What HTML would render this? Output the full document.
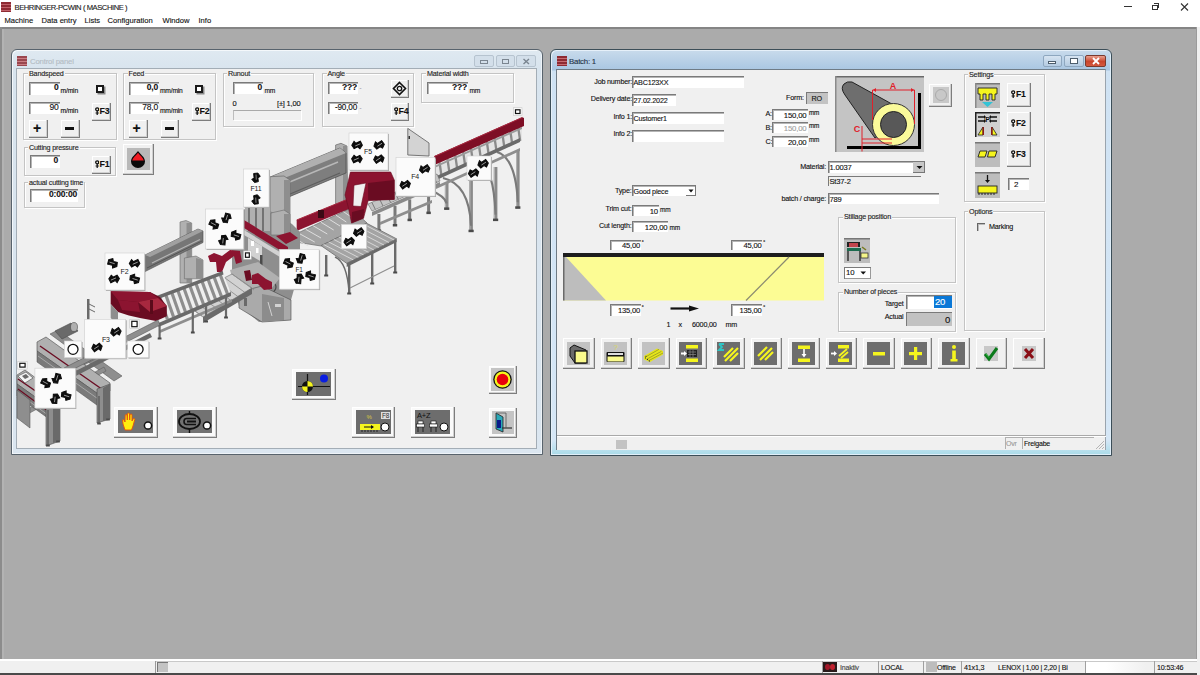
<!DOCTYPE html>
<html><head><meta charset="utf-8">
<style>
*{box-sizing:border-box}
html,body{margin:0;padding:0}
body{width:1200px;height:675px;overflow:hidden;position:relative;background:#ababab;font-family:"Liberation Sans",sans-serif;font-size:7.2px;line-height:9px;color:#111;letter-spacing:-.2px;-webkit-text-stroke-width:.12px}
.a{position:absolute}
.t{position:absolute;white-space:nowrap}
.r{text-align:right}
.gb{position:absolute;border:1px solid #c4c4c4;box-shadow:inset 1px 1px 0 #fff,1px 1px 0 #fff}
.gl{position:absolute;background:#f0f0f0;padding:0 1px;white-space:nowrap;line-height:9px;color:#222}
.ed{position:absolute;background:#fff;border-top:1px solid #7a7a7a;border-left:1px solid #7a7a7a;box-shadow:inset 1px 1px 0 #b5b5b5}
.bt{position:absolute;background:#f0f0f0;border-right:1px solid #7d7d7d;border-bottom:1px solid #7d7d7d;box-shadow:inset -1px -1px 0 #d0d0d0, inset 1px 1px 0 #fff}
.b{font-weight:bold}
.mm{font-size:6.5px}
</style></head>
<body>
<!-- app title + menu -->
<div class="a" style="left:0;top:0;width:1200px;height:27px;background:#fff"></div>
<div class="a" style="left:1px;top:2px;width:10px;height:10px;background:repeating-linear-gradient(#8e2a32 0,#8e2a32 2px,#c06068 2px,#c06068 3px)"></div>
<div class="t" style="left:14.5px;top:2.5px;font-size:7.6px;letter-spacing:-.42px;color:#1a1a1a">BEHRINGER-PCWIN ( MASCHINE )</div>
<div class="t" style="left:4.5px;top:15.7px;font-size:7.6px;letter-spacing:0">Machine</div>
<div class="t" style="left:41.5px;top:15.7px;font-size:7.6px;letter-spacing:0">Data entry</div>
<div class="t" style="left:84.5px;top:15.7px;font-size:7.6px;letter-spacing:0">Lists</div>
<div class="t" style="left:107.5px;top:15.7px;font-size:7.6px;letter-spacing:0">Configuration</div>
<div class="t" style="left:162.5px;top:15.7px;font-size:7.6px;letter-spacing:0">Window</div>
<div class="t" style="left:198.5px;top:15.7px;font-size:7.6px;letter-spacing:0">Info</div>
<!-- caption buttons app -->
<div class="a" style="left:1123.5px;top:6px;width:8px;height:1.2px;background:#333"></div>
<div class="a" style="left:1152px;top:4.5px;width:6px;height:5.5px;border:1px solid #333"></div><div class="a" style="left:1154px;top:3px;width:5px;height:5px;border-top:1px solid #333;border-right:1px solid #333"></div>
<svg class="a" style="left:1180px;top:2.5px" width="9" height="8"><path d="M1 0.5L8 7.5M8 0.5L1 7.5" stroke="#333" stroke-width="1.1"/></svg>
<!-- MDI border -->
<div class="a" style="left:0;top:27px;width:1200px;height:2px;background:#858585"></div>
<div class="a" style="left:0;top:27px;width:2px;height:632px;background:#8c8c8c"></div><div class="a" style="left:2px;top:29px;width:2px;height:630px;background:#b3b3b3"></div>
<div class="a" style="left:1196px;top:27px;width:1px;height:632px;background:#9b9b9b"></div>
<div class="a" style="left:1197px;top:27px;width:3px;height:632px;background:#f0f0f0"></div>

<!-- ===== control panel window frame ===== -->
<div class="a" style="left:11px;top:49px;width:532px;height:406px;border:1px solid #58636d;border-radius:6px 6px 0 0;background:linear-gradient(#dfe9f1,#d8e4ee 20px,#dbe6f0);box-shadow:inset 1px 1px 0 #f4f8fb,inset -1px -1px 0 #eef3f8"></div>
<div class="a" style="left:16px;top:68px;width:521px;height:381px;border:1px solid #a3adb6;background:#f0f0f0"></div>
<div class="a" style="left:17px;top:56px;width:10px;height:10px;background:repeating-linear-gradient(#8e2a32 0,#8e2a32 2px,#c76a70 2px,#c76a70 3px);opacity:.85"></div>
<div class="t" style="left:30px;top:57px;font-size:7.8px;color:#b4bcc4">Control panel</div>
<div class="a" style="left:474px;top:55px;width:20px;height:12px;border:1px solid #b6c3cf;border-radius:2px;background:#d3dfea"></div>
<div class="a" style="left:496px;top:55px;width:19px;height:12px;border:1px solid #b6c3cf;border-radius:2px;background:#d3dfea"></div>
<div class="a" style="left:516px;top:55px;width:20px;height:12px;border:1px solid #b6c3cf;border-radius:2px;background:#d3dfea"></div>
<div class="a" style="left:480px;top:60px;width:8px;height:4px;border:1px solid #7a8590"></div>
<div class="a" style="left:502px;top:59px;width:7px;height:5px;border:1px solid #7a8590"></div>
<svg class="a" style="left:522px;top:58px" width="9" height="7"><path d="M1.5 1L7 6M7 1L1.5 6" stroke="#7a8590" stroke-width="1.4"/></svg>

<!-- ===== control panel content ===== -->
<!-- Bandspeed -->
<div class="gb" style="left:23px;top:73px;width:94px;height:67px"></div>
<div class="gl" style="left:28px;top:69px">Bandspeed</div>
<div class="ed" style="left:29px;top:82px;width:31px;height:13px"></div>
<div class="t r b" style="left:29px;top:83px;width:29.5px;font-size:8.5px;line-height:9px">0</div>
<div class="t mm" style="left:60.5px;top:86px;font-size:6.8px">m/min</div>
<div class="ed" style="left:29px;top:102px;width:31px;height:12px"></div>
<div class="t r" style="left:29px;top:103px;width:29.5px;font-size:8.5px;line-height:9px">90</div>
<div class="t mm" style="left:60.5px;top:106px;font-size:6.8px">m/min</div>
<div class="a" style="left:96px;top:84.5px;width:8px;height:8px;border:2.5px solid #1a1a1a;background:#fff;box-shadow:1.5px 1.5px 0 #8a8a8a"></div>
<div class="bt" style="left:91.5px;top:102.5px;width:19px;height:18.5px"></div>
<div class="t b" style="left:94.5px;top:106px;font-size:8.8px;line-height:10px;letter-spacing:-.3px"><svg width="4.5" height="8" style="vertical-align:-0.5px;margin-right:.6px"><circle cx="2.2" cy="2.3" r="1.5" fill="none" stroke="#111" stroke-width="1.3"/><path d="M2.2 3.8V8M.6 6H3.8" stroke="#111" stroke-width="1.2"/></svg>F3</div>
<div class="bt" style="left:29px;top:119.5px;width:18.5px;height:18px"></div>
<div class="t b" style="left:33px;top:119px;font-size:14px;line-height:18px">+</div>
<div class="bt" style="left:60.5px;top:119.5px;width:19px;height:18px"></div>
<div class="a" style="left:65px;top:127px;width:9px;height:3px;background:#111"></div>
<!-- Feed -->
<div class="gb" style="left:122.5px;top:73px;width:93.5px;height:67px"></div>
<div class="gl" style="left:127.5px;top:69px">Feed</div>
<div class="ed" style="left:129px;top:82px;width:30px;height:13px"></div>
<div class="t r b" style="left:129px;top:83px;width:29px;font-size:8.5px;line-height:9px">0,0</div>
<div class="t mm" style="left:160px;top:86px;font-size:6.7px">mm/min</div>
<div class="ed" style="left:129px;top:102px;width:30px;height:12px"></div>
<div class="t r" style="left:129px;top:103px;width:29px;font-size:8.5px;line-height:9px">78,0</div>
<div class="t mm" style="left:160px;top:106px;font-size:6.7px">mm/min</div>
<div class="a" style="left:195px;top:84.5px;width:8px;height:8px;border:2.5px solid #1a1a1a;background:#fff;box-shadow:1.5px 1.5px 0 #8a8a8a"></div>
<div class="bt" style="left:192px;top:102.5px;width:18.5px;height:18.5px"></div>
<div class="t b" style="left:194.5px;top:106px;font-size:8.8px;line-height:10px;letter-spacing:-.3px"><svg width="4.5" height="8" style="vertical-align:-0.5px;margin-right:.6px"><circle cx="2.2" cy="2.3" r="1.5" fill="none" stroke="#111" stroke-width="1.3"/><path d="M2.2 3.8V8M.6 6H3.8" stroke="#111" stroke-width="1.2"/></svg>F2</div>
<div class="bt" style="left:128.5px;top:119.5px;width:19px;height:18px"></div>
<div class="t b" style="left:132.5px;top:119px;font-size:14px;line-height:18px">+</div>
<div class="bt" style="left:160.5px;top:119.5px;width:18.5px;height:18px"></div>
<div class="a" style="left:165px;top:127px;width:9px;height:3px;background:#111"></div>
<!-- Runout -->
<div class="gb" style="left:222.5px;top:73px;width:91.5px;height:53.5px"></div>
<div class="gl" style="left:227px;top:69px">Runout</div>
<div class="ed" style="left:233px;top:82px;width:30px;height:12px"></div>
<div class="t r b" style="left:233px;top:83px;width:29px;font-size:8.5px;line-height:9px">0</div>
<div class="t mm" style="left:264.5px;top:86px;font-size:6.7px">mm</div>
<div class="t" style="left:232.5px;top:99px;font-size:7.5px">0</div>
<div class="t" style="left:277px;top:99px;font-size:7.5px">[±] 1,00</div>
<div class="a" style="left:233px;top:110px;width:67.5px;height:10px;border-top:1px solid #a9a9a9;border-left:1px solid #bdbdbd;box-shadow:1px 1px 0 #fff"></div>
<!-- Angle -->
<div class="gb" style="left:321.5px;top:73px;width:92px;height:53.5px"></div>
<div class="gl" style="left:326.5px;top:69px">Angle</div>
<div class="ed" style="left:328px;top:82px;width:30px;height:12px"></div>
<div class="t r b" style="left:328px;top:83px;width:29px;font-size:8.5px;line-height:9px">???</div>
<div class="t" style="left:359.5px;top:84px;font-size:6px;color:#777">-</div>
<div class="ed" style="left:328px;top:102px;width:30px;height:12px"></div>
<div class="t r" style="left:328px;top:103px;width:29px;font-size:8.2px;line-height:9px">-90,00</div>
<div class="t" style="left:359.5px;top:104px;font-size:6px;color:#777">-</div>
<div class="bt" style="left:391px;top:80px;width:18px;height:18px"></div>
<svg class="a" style="left:392px;top:81px" width="15" height="15"><path d="M7.5 1.5L13.5 7.5L7.5 13.5L1.5 7.5Z" fill="none" stroke="#111" stroke-width="1.6"/><circle cx="7.5" cy="7.5" r="2.2" fill="none" stroke="#111" stroke-width="1.3"/></svg>
<div class="bt" style="left:391px;top:102.5px;width:18px;height:18.5px"></div>
<div class="t b" style="left:393.5px;top:106px;font-size:8.8px;line-height:10px;letter-spacing:-.3px"><svg width="4.5" height="8" style="vertical-align:-0.5px;margin-right:.6px"><circle cx="2.2" cy="2.3" r="1.5" fill="none" stroke="#111" stroke-width="1.3"/><path d="M2.2 3.8V8M.6 6H3.8" stroke="#111" stroke-width="1.2"/></svg>F4</div>
<!-- Material width -->
<div class="gb" style="left:421px;top:73px;width:92.5px;height:30px"></div>
<div class="gl" style="left:426px;top:69px">Material width</div>
<div class="ed" style="left:427px;top:82px;width:41px;height:12px"></div>
<div class="t r b" style="left:427px;top:83px;width:40px;font-size:8.5px;line-height:9px">???</div>
<div class="t mm" style="left:469.5px;top:86px;font-size:6.7px">mm</div>
<!-- Cutting pressure -->
<div class="gb" style="left:23.5px;top:146.5px;width:92.5px;height:29px"></div>
<div class="gl" style="left:28px;top:142.5px">Cutting pressure</div>
<div class="ed" style="left:29.5px;top:155px;width:30px;height:13px"></div>
<div class="t r b" style="left:29.5px;top:156px;width:28.5px;font-size:8.5px;line-height:9px">0</div>
<div class="bt" style="left:92px;top:155.5px;width:18.5px;height:18.5px"></div>
<div class="t b" style="left:94.5px;top:159px;font-size:8.8px;line-height:10px;letter-spacing:-.3px"><svg width="4.5" height="8" style="vertical-align:-0.5px;margin-right:.6px"><circle cx="2.2" cy="2.3" r="1.5" fill="none" stroke="#111" stroke-width="1.3"/><path d="M2.2 3.8V8M.6 6H3.8" stroke="#111" stroke-width="1.2"/></svg>F1</div>
<!-- drop button -->
<div class="bt" style="left:122.5px;top:144px;width:31.5px;height:30.5px"></div>
<div class="a" style="left:127px;top:147.5px;width:22.5px;height:22.5px;background:#b9b9b9"></div>
<svg class="a" style="left:127px;top:147.5px" width="23" height="23"><path d="M11 3C13.5 6.5 18 9 18 13.5A7 6.5 0 0 1 4 13.5C4 9 8.5 6.5 11 3Z" fill="#0a0a0a"/><path d="M11 4.8C13 7.5 16.2 9.8 16.8 12.5L5.2 12.5C5.8 9.8 9 7.5 11 4.8Z" fill="#f01c24"/></svg>
<!-- actual cutting time -->
<div class="gb" style="left:23.5px;top:182px;width:61px;height:26px"></div>
<div class="gl" style="left:28px;top:178px">actual cutting time</div>
<div class="ed" style="left:29.5px;top:189px;width:48.5px;height:12.5px"></div>
<div class="t r b" style="left:29.5px;top:190px;width:47.5px;font-size:8.5px;line-height:9px">0:00:00</div>

<!-- machine image -->
<svg class="a" style="left:16px;top:69px" width="521" height="380" viewBox="16 69 521 380"><rect x="444.9" y="183.0" width="3.6" height="26.4" fill="#8a8a8a"/><rect x="444.9" y="183.0" width="1.2" height="26.4" fill="#b0b0b0"/><rect x="444.1" y="207.4" width="5.2" height="2.5" fill="#4a4a4a"/><rect x="469.3" y="178.0" width="3.6" height="53.7" fill="#8a8a8a"/><rect x="469.3" y="178.0" width="1.2" height="53.7" fill="#b0b0b0"/><rect x="468.5" y="229.7" width="5.2" height="2.5" fill="#4a4a4a"/><rect x="493.8" y="167.0" width="3.6" height="53.6" fill="#8a8a8a"/><rect x="493.8" y="167.0" width="1.2" height="53.6" fill="#b0b0b0"/><rect x="493.0" y="218.6" width="5.2" height="2.5" fill="#4a4a4a"/><rect x="516.0" y="150.0" width="3.6" height="58.3" fill="#8a8a8a"/><rect x="516.0" y="150.0" width="1.2" height="58.3" fill="#b0b0b0"/><rect x="515.2" y="206.3" width="5.2" height="2.5" fill="#4a4a4a"/><path d="M443 178 Q469.1 184 471.1 225.7" stroke="#7a7a7a" stroke-width="2.2" fill="none"/><path d="M478 160 Q493.6 166 495.6 214.6" stroke="#7a7a7a" stroke-width="2.2" fill="none"/><path d="M497 152 Q515.8 158 517.8 202.3" stroke="#7a7a7a" stroke-width="2.2" fill="none"/><path d="M430 190 Q444.7 196 446.7 203.4" stroke="#7a7a7a" stroke-width="2.2" fill="none"/><polygon points="435.6,165.0 522.0,126.0 522.0,140.0 435.6,179.0" fill="#e4e4e4"/><polygon points="438.5,163.2 440.7,162.2 442.7,176.2 440.5,177.2" fill="#8a8a8a"/><polygon points="446.4,159.7 448.6,158.7 450.6,172.7 448.4,173.7" fill="#8a8a8a"/><polygon points="454.2,156.1 456.4,155.1 458.4,169.1 456.2,170.1" fill="#8a8a8a"/><polygon points="462.1,152.6 464.3,151.6 466.3,165.6 464.1,166.6" fill="#8a8a8a"/><polygon points="469.9,149.0 472.1,148.0 474.1,162.0 471.9,163.0" fill="#8a8a8a"/><polygon points="477.8,145.5 480.0,144.5 482.0,158.5 479.8,159.5" fill="#8a8a8a"/><polygon points="485.7,142.0 487.9,141.0 489.9,155.0 487.7,156.0" fill="#8a8a8a"/><polygon points="493.5,138.4 495.7,137.4 497.7,151.4 495.5,152.4" fill="#8a8a8a"/><polygon points="501.4,134.9 503.6,133.9 505.6,147.9 503.4,148.9" fill="#8a8a8a"/><polygon points="509.2,131.3 511.4,130.3 513.4,144.3 511.2,145.3" fill="#8a8a8a"/><polygon points="517.1,127.8 519.3,126.8 521.3,140.8 519.1,141.8" fill="#8a8a8a"/><polygon points="434.4,177.0 520.0,138.0 520.0,142.0 434.4,181.0" fill="#6a6a6a"/><polygon points="434.4,166.0 522.0,127.0 522.0,129.0 434.4,168.0" fill="#9a9a9a"/><polygon points="436.0,186.0 520.0,148.0 520.0,151.0 436.0,189.0" fill="#8e8e8e"/><polygon points="434.4,156.1 522.2,117.2 524.0,118.0 524.0,126.0 434.4,165.0" fill="#7e0e25"/><line x1="434.4" y1="156.5" x2="522.2" y2="117.5" stroke="#a82a40" stroke-width="1"/><polygon points="407.8,128.4 429.0,143.0 429.0,156.0 407.8,155.0" fill="#d3d3d3" stroke="#6a6a6a" stroke-width="0.9"/><rect x="408.5" y="136.0" width="1.5" height="3.0" fill="#333"/><rect x="377.4" y="214.0" width="3.0" height="17.4" fill="#7a7a7a"/><rect x="376.7" y="229.4" width="4.4" height="2.5" fill="#4a4a4a"/><rect x="408.2" y="199.4" width="3.0" height="21.3" fill="#7a7a7a"/><rect x="407.5" y="218.7" width="4.4" height="2.5" fill="#4a4a4a"/><rect x="427.1" y="192.0" width="3.0" height="21.6" fill="#7a7a7a"/><rect x="426.4" y="211.6" width="4.4" height="2.5" fill="#4a4a4a"/><rect x="393.5" y="206.0" width="3.0" height="20.0" fill="#7a7a7a"/><rect x="392.8" y="224.0" width="4.4" height="2.5" fill="#4a4a4a"/><polygon points="368.0,204.0 437.0,174.0 440.0,181.0 372.0,211.0" fill="#c4c4c4" stroke="#6a6a6a" stroke-width="0.6"/><line x1="371.8" y1="202.3" x2="375.3" y2="209.3" stroke="#7a7a7a" stroke-width="1"/><line x1="379.5" y1="199.0" x2="383.0" y2="206.0" stroke="#7a7a7a" stroke-width="1"/><line x1="387.2" y1="195.7" x2="390.7" y2="202.7" stroke="#7a7a7a" stroke-width="1"/><line x1="394.8" y1="192.3" x2="398.3" y2="199.3" stroke="#7a7a7a" stroke-width="1"/><line x1="402.5" y1="189.0" x2="406.0" y2="196.0" stroke="#7a7a7a" stroke-width="1"/><line x1="410.2" y1="185.7" x2="413.7" y2="192.7" stroke="#7a7a7a" stroke-width="1"/><line x1="417.8" y1="182.3" x2="421.3" y2="189.3" stroke="#7a7a7a" stroke-width="1"/><line x1="425.5" y1="179.0" x2="429.0" y2="186.0" stroke="#7a7a7a" stroke-width="1"/><line x1="433.2" y1="175.7" x2="436.7" y2="182.7" stroke="#7a7a7a" stroke-width="1"/><polygon points="372.0,212.0 440.0,182.0 440.0,186.0 372.0,216.0" fill="#8a8a8a"/><polygon points="380.0,222.0 432.0,200.0 432.0,203.0 380.0,225.0" fill="#8e8e8e"/><polygon points="335.6,145.0 341.0,143.3 347.0,146.0 347.8,211.0 335.6,211.0" fill="#b0b0b0" stroke="#6a6a6a" stroke-width="0.7"/><rect x="343.0" y="146.0" width="4.0" height="65.0" fill="#8e8e8e"/><polygon points="271.0,176.7 340.0,148.0 346.0,153.0 346.0,173.0 271.0,204.4" fill="#7e7e7e" stroke="#4a4a4a" stroke-width="0.7"/><polygon points="271.0,176.7 340.0,148.0 346.0,153.0 277.0,181.0" fill="#b0b0b0"/><line x1="280.0" y1="186.0" x2="338.0" y2="162.0" stroke="#b8b8b8" stroke-width="1.4"/><line x1="283.0" y1="197.0" x2="340.0" y2="173.0" stroke="#5e5e5e" stroke-width="1.2"/><rect x="283.0" y="180.0" width="2.5" height="12.0" fill="#4a4a4a"/><polygon points="270.0,176.7 284.0,176.0 290.0,180.0 290.0,233.3 270.0,233.3" fill="#b0b0b0" stroke="#6a6a6a" stroke-width="0.7"/><rect x="284.0" y="180.0" width="6.0" height="53.0" fill="#8e8e8e"/><polygon points="283.0,240.0 351.0,208.0 367.0,223.0 321.0,246.0" fill="#a4a4a4" stroke="#6a6a6a" stroke-width="0.7"/><line x1="283.0" y1="240.0" x2="302.0" y2="250.0" stroke="#e4e4e4" stroke-width="0.9"/><line x1="290.6" y1="236.4" x2="308.3" y2="246.0" stroke="#e4e4e4" stroke-width="0.9"/><line x1="298.1" y1="232.9" x2="314.7" y2="242.0" stroke="#e4e4e4" stroke-width="0.9"/><line x1="305.7" y1="229.3" x2="321.0" y2="238.0" stroke="#e4e4e4" stroke-width="0.9"/><line x1="313.2" y1="225.8" x2="327.3" y2="234.0" stroke="#e4e4e4" stroke-width="0.9"/><line x1="320.8" y1="222.2" x2="333.7" y2="230.0" stroke="#e4e4e4" stroke-width="0.9"/><line x1="328.3" y1="218.7" x2="340.0" y2="226.0" stroke="#e4e4e4" stroke-width="0.9"/><line x1="335.9" y1="215.1" x2="346.3" y2="222.0" stroke="#e4e4e4" stroke-width="0.9"/><line x1="343.4" y1="211.6" x2="352.7" y2="218.0" stroke="#e4e4e4" stroke-width="0.9"/><line x1="351.0" y1="208.0" x2="359.0" y2="214.0" stroke="#e4e4e4" stroke-width="0.9"/><polygon points="321.0,245.6 366.7,223.3 396.7,238.9 346.7,263.3" fill="#a4a4a4" stroke="#6a6a6a" stroke-width="0.8"/><line x1="323.5" y1="244.4" x2="353.5" y2="260.0" stroke="#dcdcdc" stroke-width="0.9"/><line x1="328.6" y1="241.9" x2="358.6" y2="257.5" stroke="#dcdcdc" stroke-width="0.9"/><line x1="333.7" y1="239.4" x2="363.7" y2="255.0" stroke="#dcdcdc" stroke-width="0.9"/><line x1="338.8" y1="236.9" x2="368.8" y2="252.5" stroke="#dcdcdc" stroke-width="0.9"/><line x1="343.9" y1="234.4" x2="373.9" y2="250.0" stroke="#dcdcdc" stroke-width="0.9"/><line x1="348.9" y1="232.0" x2="378.9" y2="247.6" stroke="#dcdcdc" stroke-width="0.9"/><line x1="354.0" y1="229.5" x2="384.0" y2="245.1" stroke="#dcdcdc" stroke-width="0.9"/><line x1="359.1" y1="227.0" x2="389.1" y2="242.6" stroke="#dcdcdc" stroke-width="0.9"/><line x1="364.2" y1="224.5" x2="394.2" y2="240.1" stroke="#dcdcdc" stroke-width="0.9"/><polygon points="346.7,263.3 396.7,238.9 396.7,242.0 346.7,267.0" fill="#6a6a6a"/><rect x="348.0" y="265.0" width="2.4" height="29.0" fill="#6a6a6a"/><rect x="347.2" y="292.5" width="4.0" height="2.0" fill="#4a4a4a"/><rect x="394.0" y="240.0" width="2.4" height="33.0" fill="#6a6a6a"/><rect x="393.2" y="271.5" width="4.0" height="2.0" fill="#4a4a4a"/><rect x="325.0" y="255.0" width="2.4" height="21.0" fill="#6a6a6a"/><rect x="324.2" y="274.5" width="4.0" height="2.0" fill="#4a4a4a"/><rect x="371.0" y="252.0" width="2.4" height="32.0" fill="#6a6a6a"/><rect x="370.2" y="282.5" width="4.0" height="2.0" fill="#4a4a4a"/><line x1="350.0" y1="288.0" x2="394.0" y2="266.0" stroke="#8e8e8e" stroke-width="1.2"/><path d="M335 257 Q347 262 349 292" stroke="#6a6a6a" stroke-width="1.4" fill="none"/><polygon points="296.7,220.0 351.0,197.8 351.0,208.0 296.7,231.0" fill="#8c1430"/><line x1="296.7" y1="220.0" x2="351.0" y2="197.8" stroke="#a8283f" stroke-width="1"/><rect x="318.0" y="210.0" width="6.0" height="8.0" fill="#3a0a14"/><path d="M350.4 172.1 L390.7 172 L394.3 180 L394.3 199.4 L368.2 200.6 L363.5 218.3 L351.6 223.1 L348 206 L345 195 Z M354 185.2 L366 183 L361 206.5 L353 206 Z" fill="#8c1430" fill-rule="evenodd" stroke="#6a0c22" stroke-width=".6"/><polygon points="368.0,183.0 394.3,180.0 394.3,199.4 368.2,200.6" fill="#6a0c22"/><polygon points="352.0,212.0 364.0,209.0 363.5,218.3 351.6,223.1" fill="#6a0c22"/><polygon points="236.0,212.0 258.0,205.0 272.0,212.0 292.0,224.0 300.0,232.0 300.0,268.0 291.0,300.0 291.0,320.0 259.0,322.0 239.0,306.0 232.0,280.0 232.0,240.0" fill="#8e8e8e"/><polygon points="245.0,207.0 270.0,207.0 270.0,231.0 245.0,231.0" fill="#b0b0b0"/><line x1="249.0" y1="208.0" x2="249.0" y2="231.0" stroke="#4a4a4a" stroke-width="1.2"/><line x1="256.0" y1="208.0" x2="256.0" y2="231.0" stroke="#4a4a4a" stroke-width="1.2"/><line x1="263.0" y1="208.0" x2="263.0" y2="231.0" stroke="#4a4a4a" stroke-width="1.2"/><polygon points="244.0,220.0 288.0,247.0 288.0,255.0 244.0,228.0" fill="#8c1430"/><polygon points="244.0,230.0 288.0,257.0 288.0,262.0 244.0,235.0" fill="#d2d2d2"/><polygon points="232.0,216.0 244.0,214.0 244.0,228.0 232.0,232.0" fill="#6a0c22"/><polygon points="271.0,213.0 284.0,210.0 290.0,214.0 290.0,235.0 271.0,235.0" fill="#b0b0b0" stroke="#6a6a6a" stroke-width="0.6"/><polygon points="284.0,214.0 290.0,214.0 290.0,235.0 284.0,235.0" fill="#8e8e8e"/><polygon points="248.0,238.0 262.0,246.0 262.0,262.0 248.0,254.0" fill="#d2d2d2"/><rect x="251.0" y="241.0" width="3.0" height="5.0" fill="#fff"/><rect x="256.0" y="248.0" width="2.5" height="5.0" fill="#fff"/><rect x="260.0" y="255.0" width="2.5" height="45.0" fill="#4a4a4a"/><ellipse cx="255" cy="287" rx="21" ry="10" fill="none" stroke="#4a4a4a" stroke-width="1.2"/><polygon points="230.0,270.0 258.0,262.0 280.0,278.0 262.0,300.0 236.0,292.0" fill="#b0b0b0"/><polygon points="239.0,292.0 262.0,286.0 291.0,300.0 291.0,320.0 262.0,322.0 239.0,308.0" fill="#aaaaaa" stroke="#4a4a4a" stroke-width="0.6"/><polygon points="262.0,294.0 284.0,298.0 284.0,320.0 262.0,322.0" fill="#8c8c8c"/><line x1="268.0" y1="302.0" x2="272.0" y2="316.0" stroke="#d2d2d2" stroke-width="1"/><rect x="244.0" y="298.0" width="3.0" height="8.0" fill="#6a6a6a"/><rect x="275.0" y="304.0" width="6.0" height="3.0" fill="#d2d2d2"/><polygon points="208.0,256.0 214.0,253.0 222.0,256.0 230.0,250.0 240.0,251.0 242.0,262.0 236.0,264.0 234.0,256.0 226.0,262.0 222.0,272.0 217.0,272.0 216.0,262.0 210.0,262.0" fill="#8c1430"/><polygon points="252.0,275.0 258.0,273.0 266.0,279.0 272.0,282.0 272.0,289.0 264.0,290.0 258.0,284.0 252.0,284.0" fill="#8c1430"/><polygon points="244.0,271.0 250.0,270.0 252.0,280.0 246.0,281.0" fill="#6a0c22"/><polygon points="276.0,236.0 290.0,232.0 298.0,238.0 286.0,244.0" fill="#8c1430"/><polygon points="180.0,300.0 232.0,274.0 252.0,288.0 203.0,317.0" fill="#d2d2d2" stroke="#6a6a6a" stroke-width="0.6"/><line x1="180.0" y1="300.0" x2="202.0" y2="316.0" stroke="#8e8e8e" stroke-width="0.9"/><line x1="187.4" y1="296.3" x2="209.4" y2="312.3" stroke="#8e8e8e" stroke-width="0.9"/><line x1="194.9" y1="292.6" x2="216.9" y2="308.6" stroke="#8e8e8e" stroke-width="0.9"/><line x1="202.3" y1="288.9" x2="224.3" y2="304.9" stroke="#8e8e8e" stroke-width="0.9"/><line x1="209.7" y1="285.1" x2="231.7" y2="301.1" stroke="#8e8e8e" stroke-width="0.9"/><line x1="217.1" y1="281.4" x2="239.1" y2="297.4" stroke="#8e8e8e" stroke-width="0.9"/><line x1="224.6" y1="277.7" x2="246.6" y2="293.7" stroke="#8e8e8e" stroke-width="0.9"/><line x1="232.0" y1="274.0" x2="254.0" y2="290.0" stroke="#8e8e8e" stroke-width="0.9"/><polygon points="203.0,317.0 252.0,288.0 252.0,294.0 203.0,323.0" fill="#6a6a6a"/><polygon points="180.0,222.0 186.0,220.5 191.7,223.0 191.7,283.0 180.0,283.0" fill="#b0b0b0" stroke="#6a6a6a" stroke-width="0.6"/><rect x="186.5" y="223.0" width="5.0" height="60.0" fill="#8e8e8e"/><polygon points="145.0,255.0 198.0,229.0 203.0,231.0 203.0,242.5 145.0,271.6" fill="#767676" stroke="#4a4a4a" stroke-width="0.6"/><polygon points="145.0,255.0 198.0,229.0 203.0,231.0 150.0,257.0" fill="#a0a0a0"/><line x1="152.0" y1="263.0" x2="200.0" y2="239.5" stroke="#b4b4b4" stroke-width="1.2"/><line x1="147.0" y1="268.0" x2="202.0" y2="241.0" stroke="#555" stroke-width="1"/><polygon points="184.4,258.0 196.0,256.0 203.0,260.0 203.0,278.8 184.4,278.8" fill="#b0b0b0" stroke="#6a6a6a" stroke-width="0.6"/><polygon points="196.0,258.0 203.0,260.0 203.0,278.8 196.0,278.8" fill="#8e8e8e"/><polygon points="156.4,297.5 222.8,272.6 231.0,293.4 158.5,324.5" fill="#efefef"/><polygon points="157.9,296.9 160.9,295.9 168.9,318.8 165.9,319.8" fill="#8e8e8e"/><polygon points="164.0,294.6 167.0,293.6 175.0,316.3 172.0,317.3" fill="#8e8e8e"/><polygon points="170.0,292.3 173.0,291.3 181.0,313.9 178.0,314.9" fill="#8e8e8e"/><polygon points="176.0,290.1 179.0,289.1 187.0,311.4 184.0,312.4" fill="#8e8e8e"/><polygon points="182.1,287.8 185.1,286.8 193.1,309.0 190.1,310.0" fill="#8e8e8e"/><polygon points="188.1,285.6 191.1,284.6 199.1,306.6 196.1,307.6" fill="#8e8e8e"/><polygon points="194.1,283.3 197.1,282.3 205.1,304.1 202.1,305.1" fill="#8e8e8e"/><polygon points="200.2,281.0 203.2,280.0 211.2,301.7 208.2,302.7" fill="#8e8e8e"/><polygon points="206.2,278.8 209.2,277.8 217.2,299.2 214.2,300.2" fill="#8e8e8e"/><polygon points="212.2,276.5 215.2,275.5 223.2,296.8 220.2,297.8" fill="#8e8e8e"/><polygon points="218.3,274.2 221.3,273.2 229.3,294.3 226.3,295.3" fill="#8e8e8e"/><polygon points="156.4,296.0 222.8,271.0 223.5,274.5 157.0,299.5" fill="#6a6a6a"/><polygon points="158.5,323.0 231.0,292.0 231.0,296.0 158.5,327.0" fill="#6a6a6a"/><polygon points="160.0,330.0 232.0,299.0 232.0,302.0 160.0,333.0" fill="#8e8e8e"/><rect x="158.5" y="325.0" width="2.2" height="14.0" fill="#6a6a6a"/><rect x="157.7" y="337.5" width="3.8" height="2.0" fill="#4a4a4a"/><rect x="191.7" y="311.0" width="2.2" height="22.0" fill="#6a6a6a"/><rect x="190.9" y="331.5" width="3.8" height="2.0" fill="#4a4a4a"/><rect x="224.9" y="296.0" width="2.2" height="22.0" fill="#6a6a6a"/><rect x="224.1" y="316.5" width="3.8" height="2.0" fill="#4a4a4a"/><rect x="205.0" y="305.0" width="2.2" height="17.0" fill="#6a6a6a"/><rect x="204.2" y="320.5" width="3.8" height="2.0" fill="#4a4a4a"/><polygon points="110.7,291.3 150.0,292.0 160.0,297.0 166.8,306.0 166.8,316.2 156.0,321.0 140.0,318.0 128.9,315.6 118.0,312.0 110.7,304.0" fill="#6a0c22"/><polygon points="110.7,291.3 150.0,292.0 158.0,298.0 138.0,302.0 118.0,300.0" fill="#8c1430"/><polygon points="138.0,302.0 158.0,298.0 166.8,306.0 150.0,312.0" fill="#a8283f"/><polygon points="118.0,300.0 138.0,302.0 140.0,312.0 122.0,310.0" fill="#8c1430"/><rect x="150.0" y="300.0" width="3.0" height="14.0" fill="#5a0a1a"/><polygon points="110.7,304.0 118.0,312.0 118.0,326.0 110.7,318.0" fill="#8e8e8e"/><rect x="87.0" y="299.0" width="2.5" height="22.0" fill="#6a6a6a"/><line x1="89.0" y1="304.0" x2="95.0" y2="307.0" stroke="#6a6a6a" stroke-width="1"/><line x1="89.0" y1="309.0" x2="95.0" y2="312.0" stroke="#6a6a6a" stroke-width="1"/><polygon points="50.0,334.0 58.0,330.0 122.0,376.0 114.0,381.0" fill="#8e8e8e" stroke="#4a4a4a" stroke-width="0.5"/><polygon points="17.0,397.0 95.0,354.0 97.0,358.0 19.0,401.0" fill="#8e8e8e" stroke="#4a4a4a" stroke-width="0.4"/><polygon points="26.0,410.0 104.0,367.0 106.0,371.0 28.0,414.0" fill="#8e8e8e" stroke="#4a4a4a" stroke-width="0.4"/><polygon points="37.0,342.0 46.0,337.0 110.0,383.0 110.0,391.0 101.0,396.0 37.0,351.0" fill="#b0b0b0" stroke="#4a4a4a" stroke-width="0.6"/><polygon points="37.0,351.0 101.0,396.0 101.0,408.0 37.0,362.0" fill="#7a7a7a" stroke="#4a4a4a" stroke-width="0.5"/><line x1="40.0" y1="346.0" x2="106.0" y2="392.0" stroke="#6a0c22" stroke-width="1.4"/><line x1="38.0" y1="356.0" x2="101.0" y2="401.0" stroke="#a8a8a8" stroke-width="1"/><polygon points="97.0,389.0 110.0,384.0 110.0,419.0 97.0,423.0" fill="#8e8e8e" stroke="#4a4a4a" stroke-width="0.6"/><polygon points="103.0,388.0 110.0,384.0 110.0,419.0 103.0,421.0" fill="#6a6a6a"/><rect x="98.0" y="396.0" width="2.0" height="28.0" fill="#6a6a6a"/><rect x="97.2" y="422.5" width="3.6" height="2.0" fill="#4a4a4a"/><rect x="107.0" y="392.0" width="2.0" height="28.0" fill="#6a6a6a"/><rect x="106.2" y="418.5" width="3.6" height="2.0" fill="#4a4a4a"/><polygon points="17.0,375.0 25.0,370.0 60.0,396.0 60.0,404.0 52.0,409.0 17.0,384.0" fill="#b0b0b0" stroke="#4a4a4a" stroke-width="0.6"/><polygon points="17.0,384.0 52.0,409.0 52.0,421.0 17.0,396.0" fill="#7a7a7a" stroke="#4a4a4a" stroke-width="0.5"/><line x1="18.0" y1="379.0" x2="56.0" y2="405.0" stroke="#6a0c22" stroke-width="1.5"/><line x1="18.0" y1="389.0" x2="52.0" y2="414.0" stroke="#6a0c22" stroke-width="1.2"/><line x1="18.0" y1="393.0" x2="52.0" y2="418.0" stroke="#a8a8a8" stroke-width="1"/><polygon points="46.0,404.0 60.0,398.0 60.0,441.0 46.0,446.0" fill="#8e8e8e" stroke="#4a4a4a" stroke-width="0.6"/><polygon points="53.0,401.0 60.0,398.0 60.0,441.0 53.0,443.0" fill="#6a6a6a"/><polygon points="17.0,390.0 30.0,400.0 30.0,428.0 17.0,418.0" fill="#8e8e8e" stroke="#4a4a4a" stroke-width="0.5"/><rect x="47.0" y="410.0" width="2.0" height="36.0" fill="#6a6a6a"/><rect x="46.2" y="444.5" width="3.6" height="2.0" fill="#4a4a4a"/><rect x="57.0" y="405.0" width="2.0" height="37.0" fill="#6a6a6a"/><rect x="56.2" y="440.5" width="3.6" height="2.0" fill="#4a4a4a"/><polygon points="55.0,331.0 71.0,323.0 78.0,331.0 62.0,339.0" fill="#6a6a6a" stroke="#4a4a4a" stroke-width="0.6"/><ellipse cx="74" cy="327" rx="3.5" ry="4.5" fill="#b0b0b0" stroke="#4a4a4a" stroke-width=".6"/><polygon points="18.0,376.0 26.0,372.0 33.0,378.0 25.0,383.0" fill="#f4f4f4" stroke="#4a4a4a" stroke-width="0.6"/><polygon points="22.0,376.0 26.0,374.0 29.0,377.0 25.0,379.0" fill="#6a6a6a"/><polygon points="64.0,368.0 158.0,320.0 160.0,325.0 66.0,373.0" fill="#8e8e8e" stroke="#4a4a4a" stroke-width="0.5"/><polygon points="62.0,378.0 150.0,333.0 152.0,337.0 64.0,382.0" fill="#6a6a6a"/><rect x="350.0" y="134.0" width="39.0" height="37.0" fill="#a8a8a8"/><rect x="349.0" y="133.0" width="39.0" height="37.0" fill="#fbfbfb" stroke="#d0d0d0" stroke-width="0.6"/><g transform="translate(357.0,145.0) rotate(-20) scale(1.0)"><path d="M-5 -1.5 L-1.5 -4.5 L-0.5 -2 L4.5 -2.5 L5 2 L1.5 4.5 L0 2 L-4 2.5 Z" fill="#0d0d0d" stroke="#0d0d0d" stroke-width="1"/><path d="M-2 0.3 L3.5 0" stroke="#bdbdbd" stroke-width=".7"/></g><g transform="translate(379.0,145.0) rotate(-30) scale(1.0)"><path d="M-5 -1.5 L-1.5 -4.5 L-0.5 -2 L4.5 -2.5 L5 2 L1.5 4.5 L0 2 L-4 2.5 Z" fill="#0d0d0d" stroke="#0d0d0d" stroke-width="1"/><path d="M-2 0.3 L3.5 0" stroke="#bdbdbd" stroke-width=".7"/></g><g transform="translate(357.0,159.0) rotate(160) scale(1.0)"><path d="M-5 -1.5 L-1.5 -4.5 L-0.5 -2 L4.5 -2.5 L5 2 L1.5 4.5 L0 2 L-4 2.5 Z" fill="#0d0d0d" stroke="#0d0d0d" stroke-width="1"/><path d="M-2 0.3 L3.5 0" stroke="#bdbdbd" stroke-width=".7"/></g><g transform="translate(379.0,159.0) rotate(150) scale(1.0)"><path d="M-5 -1.5 L-1.5 -4.5 L-0.5 -2 L4.5 -2.5 L5 2 L1.5 4.5 L0 2 L-4 2.5 Z" fill="#0d0d0d" stroke="#0d0d0d" stroke-width="1"/><path d="M-2 0.3 L3.5 0" stroke="#bdbdbd" stroke-width=".7"/></g><text x="368.0" y="153.5" font-size="7" text-anchor="middle" font-family="Liberation Sans" fill="#222">F5</text><rect x="397.0" y="158.5" width="39.0" height="38.5" fill="#a8a8a8"/><rect x="396.0" y="157.5" width="39.0" height="38.5" fill="#fbfbfb" stroke="#d0d0d0" stroke-width="0.6"/><g transform="translate(424.6,169.0) rotate(-30) scale(1.0)"><path d="M-5 -1.5 L-1.5 -4.5 L-0.5 -2 L4.5 -2.5 L5 2 L1.5 4.5 L0 2 L-4 2.5 Z" fill="#0d0d0d" stroke="#0d0d0d" stroke-width="1"/><path d="M-2 0.3 L3.5 0" stroke="#bdbdbd" stroke-width=".7"/></g><g transform="translate(405.3,184.6) rotate(150) scale(1.0)"><path d="M-5 -1.5 L-1.5 -4.5 L-0.5 -2 L4.5 -2.5 L5 2 L1.5 4.5 L0 2 L-4 2.5 Z" fill="#0d0d0d" stroke="#0d0d0d" stroke-width="1"/><path d="M-2 0.3 L3.5 0" stroke="#bdbdbd" stroke-width=".7"/></g><text x="415.2" y="178.5" font-size="7" text-anchor="middle" font-family="Liberation Sans" fill="#222">F4</text><rect x="468.0" y="157.0" width="24.0" height="24.0" fill="#a8a8a8"/><rect x="467.0" y="156.0" width="24.0" height="24.0" fill="#fbfbfb" stroke="#d0d0d0" stroke-width="0.6"/><g transform="translate(483.0,163.8) rotate(-30) scale(1.0)"><path d="M-5 -1.5 L-1.5 -4.5 L-0.5 -2 L4.5 -2.5 L5 2 L1.5 4.5 L0 2 L-4 2.5 Z" fill="#0d0d0d" stroke="#0d0d0d" stroke-width="1"/><path d="M-2 0.3 L3.5 0" stroke="#bdbdbd" stroke-width=".7"/></g><g transform="translate(473.7,173.0) rotate(150) scale(1.0)"><path d="M-5 -1.5 L-1.5 -4.5 L-0.5 -2 L4.5 -2.5 L5 2 L1.5 4.5 L0 2 L-4 2.5 Z" fill="#0d0d0d" stroke="#0d0d0d" stroke-width="1"/><path d="M-2 0.3 L3.5 0" stroke="#bdbdbd" stroke-width=".7"/></g><rect x="244.5" y="170.0" width="25.5" height="38.0" fill="#a8a8a8"/><rect x="243.5" y="169.0" width="25.5" height="38.0" fill="#fbfbfb" stroke="#d0d0d0" stroke-width="0.6"/><g transform="translate(256.0,177.8) rotate(-90) scale(0.95)"><path d="M-5 -1.5 L-1.5 -4.5 L-0.5 -2 L4.5 -2.5 L5 2 L1.5 4.5 L0 2 L-4 2.5 Z" fill="#0d0d0d" stroke="#0d0d0d" stroke-width="1"/><path d="M-2 0.3 L3.5 0" stroke="#bdbdbd" stroke-width=".7"/></g><g transform="translate(256.0,199.5) rotate(90) scale(0.95)"><path d="M-5 -1.5 L-1.5 -4.5 L-0.5 -2 L4.5 -2.5 L5 2 L1.5 4.5 L0 2 L-4 2.5 Z" fill="#0d0d0d" stroke="#0d0d0d" stroke-width="1"/><path d="M-2 0.3 L3.5 0" stroke="#bdbdbd" stroke-width=".7"/></g><text x="256.0" y="191.0" font-size="7" text-anchor="middle" font-family="Liberation Sans" fill="#222">F11</text><rect x="206.6" y="210.0" width="37.9" height="40.0" fill="#a8a8a8"/><rect x="205.6" y="209.0" width="37.9" height="40.0" fill="#fbfbfb" stroke="#d0d0d0" stroke-width="0.6"/><g transform="translate(214.0,224.4) rotate(-150) scale(1.0)"><path d="M-5 -1.5 L-1.5 -4.5 L-0.5 -2 L4.5 -2.5 L5 2 L1.5 4.5 L0 2 L-4 2.5 Z" fill="#0d0d0d" stroke="#0d0d0d" stroke-width="1"/><path d="M-2 0.3 L3.5 0" stroke="#bdbdbd" stroke-width=".7"/></g><g transform="translate(226.4,218.2) rotate(-70) scale(1.0)"><path d="M-5 -1.5 L-1.5 -4.5 L-0.5 -2 L4.5 -2.5 L5 2 L1.5 4.5 L0 2 L-4 2.5 Z" fill="#0d0d0d" stroke="#0d0d0d" stroke-width="1"/><path d="M-2 0.3 L3.5 0" stroke="#bdbdbd" stroke-width=".7"/></g><g transform="translate(223.3,240.0) rotate(100) scale(1.0)"><path d="M-5 -1.5 L-1.5 -4.5 L-0.5 -2 L4.5 -2.5 L5 2 L1.5 4.5 L0 2 L-4 2.5 Z" fill="#0d0d0d" stroke="#0d0d0d" stroke-width="1"/><path d="M-2 0.3 L3.5 0" stroke="#bdbdbd" stroke-width=".7"/></g><g transform="translate(235.8,235.3) rotate(20) scale(1.0)"><path d="M-5 -1.5 L-1.5 -4.5 L-0.5 -2 L4.5 -2.5 L5 2 L1.5 4.5 L0 2 L-4 2.5 Z" fill="#0d0d0d" stroke="#0d0d0d" stroke-width="1"/><path d="M-2 0.3 L3.5 0" stroke="#bdbdbd" stroke-width=".7"/></g><rect x="342.5" y="225.4" width="24.9" height="24.3" fill="#a8a8a8"/><rect x="341.5" y="224.4" width="24.9" height="24.3" fill="#fbfbfb" stroke="#d0d0d0" stroke-width="0.6"/><g transform="translate(349.3,241.5) rotate(150) scale(1.0)"><path d="M-5 -1.5 L-1.5 -4.5 L-0.5 -2 L4.5 -2.5 L5 2 L1.5 4.5 L0 2 L-4 2.5 Z" fill="#0d0d0d" stroke="#0d0d0d" stroke-width="1"/><path d="M-2 0.3 L3.5 0" stroke="#bdbdbd" stroke-width=".7"/></g><g transform="translate(358.6,232.2) rotate(-30) scale(1.0)"><path d="M-5 -1.5 L-1.5 -4.5 L-0.5 -2 L4.5 -2.5 L5 2 L1.5 4.5 L0 2 L-4 2.5 Z" fill="#0d0d0d" stroke="#0d0d0d" stroke-width="1"/><path d="M-2 0.3 L3.5 0" stroke="#bdbdbd" stroke-width=".7"/></g><rect x="280.3" y="250.3" width="39.8" height="39.8" fill="#a8a8a8"/><rect x="279.3" y="249.3" width="39.8" height="39.8" fill="#fbfbfb" stroke="#d0d0d0" stroke-width="0.6"/><g transform="translate(288.6,263.3) rotate(-150) scale(1.0)"><path d="M-5 -1.5 L-1.5 -4.5 L-0.5 -2 L4.5 -2.5 L5 2 L1.5 4.5 L0 2 L-4 2.5 Z" fill="#0d0d0d" stroke="#0d0d0d" stroke-width="1"/><path d="M-2 0.3 L3.5 0" stroke="#bdbdbd" stroke-width=".7"/></g><g transform="translate(301.0,258.6) rotate(-70) scale(1.0)"><path d="M-5 -1.5 L-1.5 -4.5 L-0.5 -2 L4.5 -2.5 L5 2 L1.5 4.5 L0 2 L-4 2.5 Z" fill="#0d0d0d" stroke="#0d0d0d" stroke-width="1"/><path d="M-2 0.3 L3.5 0" stroke="#bdbdbd" stroke-width=".7"/></g><g transform="translate(299.0,278.8) rotate(100) scale(1.0)"><path d="M-5 -1.5 L-1.5 -4.5 L-0.5 -2 L4.5 -2.5 L5 2 L1.5 4.5 L0 2 L-4 2.5 Z" fill="#0d0d0d" stroke="#0d0d0d" stroke-width="1"/><path d="M-2 0.3 L3.5 0" stroke="#bdbdbd" stroke-width=".7"/></g><g transform="translate(310.4,275.7) rotate(20) scale(1.0)"><path d="M-5 -1.5 L-1.5 -4.5 L-0.5 -2 L4.5 -2.5 L5 2 L1.5 4.5 L0 2 L-4 2.5 Z" fill="#0d0d0d" stroke="#0d0d0d" stroke-width="1"/><path d="M-2 0.3 L3.5 0" stroke="#bdbdbd" stroke-width=".7"/></g><text x="299.0" y="272.0" font-size="6.5" text-anchor="middle" font-family="Liberation Sans" fill="#222">F1</text><rect x="106.0" y="254.0" width="39.4" height="37.0" fill="#a8a8a8"/><rect x="105.0" y="253.0" width="39.4" height="37.0" fill="#fbfbfb" stroke="#d0d0d0" stroke-width="0.6"/><g transform="translate(112.7,263.3) rotate(-160) scale(1.0)"><path d="M-5 -1.5 L-1.5 -4.5 L-0.5 -2 L4.5 -2.5 L5 2 L1.5 4.5 L0 2 L-4 2.5 Z" fill="#0d0d0d" stroke="#0d0d0d" stroke-width="1"/><path d="M-2 0.3 L3.5 0" stroke="#bdbdbd" stroke-width=".7"/></g><g transform="translate(134.5,263.3) rotate(-20) scale(1.0)"><path d="M-5 -1.5 L-1.5 -4.5 L-0.5 -2 L4.5 -2.5 L5 2 L1.5 4.5 L0 2 L-4 2.5 Z" fill="#0d0d0d" stroke="#0d0d0d" stroke-width="1"/><path d="M-2 0.3 L3.5 0" stroke="#bdbdbd" stroke-width=".7"/></g><g transform="translate(114.2,278.9) rotate(160) scale(1.0)"><path d="M-5 -1.5 L-1.5 -4.5 L-0.5 -2 L4.5 -2.5 L5 2 L1.5 4.5 L0 2 L-4 2.5 Z" fill="#0d0d0d" stroke="#0d0d0d" stroke-width="1"/><path d="M-2 0.3 L3.5 0" stroke="#bdbdbd" stroke-width=".7"/></g><g transform="translate(134.5,278.9) rotate(20) scale(1.0)"><path d="M-5 -1.5 L-1.5 -4.5 L-0.5 -2 L4.5 -2.5 L5 2 L1.5 4.5 L0 2 L-4 2.5 Z" fill="#0d0d0d" stroke="#0d0d0d" stroke-width="1"/><path d="M-2 0.3 L3.5 0" stroke="#bdbdbd" stroke-width=".7"/></g><text x="124.5" y="273.5" font-size="7" text-anchor="middle" font-family="Liberation Sans" fill="#222">F2</text><rect x="85.7" y="320.3" width="41.0" height="38.9" fill="#a8a8a8"/><rect x="84.7" y="319.3" width="41.0" height="38.9" fill="#fbfbfb" stroke="#d0d0d0" stroke-width="0.6"/><g transform="translate(115.8,331.8) rotate(-30) scale(1.0)"><path d="M-5 -1.5 L-1.5 -4.5 L-0.5 -2 L4.5 -2.5 L5 2 L1.5 4.5 L0 2 L-4 2.5 Z" fill="#0d0d0d" stroke="#0d0d0d" stroke-width="1"/><path d="M-2 0.3 L3.5 0" stroke="#bdbdbd" stroke-width=".7"/></g><g transform="translate(97.1,347.3) rotate(150) scale(1.0)"><path d="M-5 -1.5 L-1.5 -4.5 L-0.5 -2 L4.5 -2.5 L5 2 L1.5 4.5 L0 2 L-4 2.5 Z" fill="#0d0d0d" stroke="#0d0d0d" stroke-width="1"/><path d="M-2 0.3 L3.5 0" stroke="#bdbdbd" stroke-width=".7"/></g><text x="105.8" y="342.0" font-size="7" text-anchor="middle" font-family="Liberation Sans" fill="#222">F3</text><rect x="65.4" y="342.0" width="17.2" height="16.6" fill="#a8a8a8"/><rect x="64.4" y="341.0" width="17.2" height="16.6" fill="#fbfbfb" stroke="#d0d0d0" stroke-width="0.6"/><circle cx="73.0" cy="349.3" r="5.0" fill="#fff" stroke="#111" stroke-width="1.3"/><rect x="128.6" y="342.0" width="20.9" height="16.6" fill="#a8a8a8"/><rect x="127.6" y="341.0" width="20.9" height="16.6" fill="#fbfbfb" stroke="#d0d0d0" stroke-width="0.6"/><circle cx="138.1" cy="349.3" r="5.0" fill="#fff" stroke="#111" stroke-width="1.3"/><rect x="35.9" y="369.2" width="40.4" height="39.8" fill="#a8a8a8"/><rect x="34.9" y="368.2" width="40.4" height="39.8" fill="#fbfbfb" stroke="#d0d0d0" stroke-width="0.6"/><g transform="translate(45.8,383.1) rotate(-150) scale(1.0)"><path d="M-5 -1.5 L-1.5 -4.5 L-0.5 -2 L4.5 -2.5 L5 2 L1.5 4.5 L0 2 L-4 2.5 Z" fill="#0d0d0d" stroke="#0d0d0d" stroke-width="1"/><path d="M-2 0.3 L3.5 0" stroke="#bdbdbd" stroke-width=".7"/></g><g transform="translate(56.7,378.5) rotate(-70) scale(1.0)"><path d="M-5 -1.5 L-1.5 -4.5 L-0.5 -2 L4.5 -2.5 L5 2 L1.5 4.5 L0 2 L-4 2.5 Z" fill="#0d0d0d" stroke="#0d0d0d" stroke-width="1"/><path d="M-2 0.3 L3.5 0" stroke="#bdbdbd" stroke-width=".7"/></g><g transform="translate(55.1,398.7) rotate(100) scale(1.0)"><path d="M-5 -1.5 L-1.5 -4.5 L-0.5 -2 L4.5 -2.5 L5 2 L1.5 4.5 L0 2 L-4 2.5 Z" fill="#0d0d0d" stroke="#0d0d0d" stroke-width="1"/><path d="M-2 0.3 L3.5 0" stroke="#bdbdbd" stroke-width=".7"/></g><g transform="translate(66.0,395.6) rotate(20) scale(1.0)"><path d="M-5 -1.5 L-1.5 -4.5 L-0.5 -2 L4.5 -2.5 L5 2 L1.5 4.5 L0 2 L-4 2.5 Z" fill="#0d0d0d" stroke="#0d0d0d" stroke-width="1"/><path d="M-2 0.3 L3.5 0" stroke="#bdbdbd" stroke-width=".7"/></g><rect x="243.5" y="250.9" width="7.8" height="8.4" fill="#fbfbfb" stroke="#bbb" stroke-width="0.5"/><rect x="245.5" y="252.9" width="3.8" height="4.4" fill="#fff" stroke="#111" stroke-width="1.2"/><rect x="129.8" y="319.3" width="9.3" height="9.4" fill="#fbfbfb" stroke="#bbb" stroke-width="0.5"/><rect x="131.8" y="321.3" width="5.3" height="5.4" fill="#fff" stroke="#111" stroke-width="1.2"/><rect x="17.8" y="361.3" width="9.3" height="7.8" fill="#fbfbfb" stroke="#bbb" stroke-width="0.5"/><rect x="19.8" y="363.3" width="5.3" height="3.8" fill="#fff" stroke="#111" stroke-width="1.2"/><rect x="513.5" y="107.8" width="8.5" height="7.7" fill="#fbfbfb" stroke="#bbb" stroke-width="0.5"/><rect x="515.5" y="109.8" width="4.5" height="3.7" fill="#fff" stroke="#111" stroke-width="1.2"/></svg>
<!-- bottom buttons control panel -->
<div class="bt" style="left:114px;top:406.5px;width:44px;height:31px;background:#fafafa"></div>
<svg class="a" style="left:118px;top:409.5px" width="35" height="23.5"><rect width="35" height="23.5" fill="#727272"/>
<path d="M7 20L5 14L4.5 10Q5 9 6 10L7 12L7.2 5Q8 4 9 5L9.3 10L9.5 3.5Q10.5 2.5 11.5 3.5L11.7 10L12 4.5Q13 3.5 14 4.5L14 11L15.5 8.5Q16.8 8 16.8 9.5L15 16L13.5 20Z" fill="#ffee10" stroke="#e8500a" stroke-width=".9"/>
<circle cx="30" cy="15.5" r="3.6" fill="#fff" stroke="#111" stroke-width="1.5"/></svg>
<div class="bt" style="left:173px;top:406.5px;width:44px;height:31px;background:#fafafa"></div>
<svg class="a" style="left:177px;top:409.5px" width="35" height="23.5"><rect width="35" height="23.5" fill="#727272"/>
<ellipse cx="12.5" cy="11.5" rx="10.5" ry="7.5" fill="none" stroke="#111" stroke-width="1.8"/><path d="M12.5 1V4M12.5 19V23" stroke="#111" stroke-width="1.4"/>
<path d="M19 8.5H9.5Q7 8.5 7 11.5Q7 14.5 9.5 14.5H19" fill="none" stroke="#111" stroke-width="1.6"/><path d="M10 11.5H19" stroke="#111" stroke-width="2"/>
<circle cx="30" cy="15.5" r="3.6" fill="#fff" stroke="#111" stroke-width="1.5"/></svg>
<div class="bt" style="left:292px;top:368.5px;width:44px;height:31px;background:#fafafa"></div>
<svg class="a" style="left:296px;top:372px" width="35" height="24"><rect width="35" height="24" fill="#6d6d6d"/>
<path d="M2 14.5H34M11.5 2V23" stroke="#111" stroke-width="1.2"/><circle cx="11.5" cy="14.5" r="5.5" fill="#111"/><path d="M11.5 9A5.5 5.5 0 0 1 17 14.5H11.5ZM11.5 20A5.5 5.5 0 0 1 6 14.5H11.5Z" fill="#f5f51e"/><circle cx="28" cy="6.5" r="4" fill="#0a1ee0"/></svg>
<div class="bt" style="left:488.5px;top:365.5px;width:28px;height:28px;background:#fafafa"></div>
<svg class="a" style="left:491px;top:368px" width="23" height="23"><rect width="23" height="23" fill="#c4c4c4"/><circle cx="11.5" cy="11.5" r="9.3" fill="#111"/><circle cx="11.5" cy="11.5" r="8" fill="#f5f51e"/><circle cx="11.5" cy="11.5" r="5.8" fill="#e8000c"/></svg>
<div class="bt" style="left:352px;top:407px;width:43px;height:30.5px;background:#fafafa"></div>
<svg class="a" style="left:355.5px;top:409.5px" width="35" height="24"><rect width="35" height="24" fill="#6d6d6d"/>
<rect x="4" y="14" width="20" height="6" fill="#f5f51e"/><path d="M6 20V22M9 20V22M12 20V22M15 20V22M18 20V22M21 20V22" stroke="#111" stroke-width=".8"/><path d="M8 17H17" stroke="#111" stroke-width="1"/><path d="M15 15L18 17L15 19Z" fill="#111"/>
<text x="13" y="9" font-size="6" fill="#d8c840" text-anchor="middle" font-family="Liberation Sans">%</text>
<rect x="25" y="2" width="9" height="7" fill="#ddd"/><text x="29.5" y="8" font-size="6.5" fill="#333" text-anchor="middle" font-family="Liberation Sans">F8</text>
<circle cx="29" cy="17" r="4" fill="#fff" stroke="#111" stroke-width="1"/></svg>
<div class="bt" style="left:411px;top:407px;width:43.5px;height:30.5px;background:#fafafa"></div>
<svg class="a" style="left:414.5px;top:409.5px" width="35" height="24"><rect width="35" height="24" fill="#6d6d6d"/>
<text x="2" y="8" font-size="7.5" fill="#111" font-family="Liberation Sans">A+Z</text>
<rect x="3" y="11" width="5" height="3" fill="#fff" stroke="#111" stroke-width=".6"/><rect x="1.5" y="14" width="8" height="3" fill="#fff" stroke="#111" stroke-width=".6"/><path d="M3 17V22M8 17V22" stroke="#111" stroke-width=".8"/>
<rect x="16" y="11" width="5" height="3" fill="#fff" stroke="#111" stroke-width=".6"/><rect x="14.5" y="14" width="8" height="3" fill="#fff" stroke="#111" stroke-width=".6"/><path d="M16 17V22M21 17V22" stroke="#111" stroke-width=".8"/>
<circle cx="29" cy="17" r="4" fill="#fff" stroke="#111" stroke-width="1"/></svg>
<div class="bt" style="left:489px;top:408px;width:28px;height:29.5px;background:#fafafa"></div>
<svg class="a" style="left:492px;top:411px" width="22" height="23"><rect width="22" height="23" fill="#c4c4c4"/>
<path d="M4 2L11 6V21L4 18Z" fill="#2aa8b8" stroke="#222" stroke-width=".8"/><rect x="5" y="9" width="4" height="8" fill="#0a1a8a"/><path d="M10 17H20" stroke="#333" stroke-width="1.2"/><path d="M4 2H14V17" stroke="#555" stroke-width=".8" fill="none"/></svg>

<!-- ===== batch window frame ===== -->
<div class="a" style="left:550px;top:49px;width:562px;height:407px;border:1px solid #3c4e58;border-radius:6px 6px 0 0;background:linear-gradient(#c9dbec,#a9c6e2 20px,#cfe2f3 21px,#d6e7f6 390px,#a9dbe8);box-shadow:inset 1px 1px 0 #e6f0f9,inset -1px -1px 0 #e0eef8"></div>
<div class="a" style="left:556px;top:69px;width:550px;height:381px;border-top:1px solid #6f7b85;border-left:1px solid #6f7b85;border-right:1px solid #9aa4ad;background:#f0f0f0"></div>
<div class="a" style="left:557px;top:56px;width:10px;height:10px;background:repeating-linear-gradient(#8e2a32 0,#8e2a32 2px,#c76a70 2px,#c76a70 3px)"></div>
<div class="t" style="left:569px;top:57px;font-size:7.8px;color:#1e3245">Batch: 1</div>
<div class="a" style="left:1043px;top:55px;width:19px;height:12px;border:1px solid #8ea7bf;border-radius:2px;background:linear-gradient(#d6e4f1,#b4cbe1)"></div>
<div class="a" style="left:1064px;top:55px;width:20px;height:12px;border:1px solid #8ea7bf;border-radius:2px;background:linear-gradient(#d6e4f1,#b4cbe1)"></div>
<div class="a" style="left:1085px;top:55px;width:21px;height:12px;border:1px solid #7a3a2e;border-radius:2px;background:linear-gradient(#e9a08e,#c9452d 55%,#d4583e)"></div>
<div class="a" style="left:1048px;top:61px;width:8px;height:3px;border:1px solid #4d5d6c;background:#fff"></div>
<div class="a" style="left:1070px;top:58px;width:8px;height:6px;border:1px solid #4d5d6c;background:#fff"></div>
<svg class="a" style="left:1091px;top:57px" width="10" height="8"><path d="M2 1L8 7M8 1L2 7" stroke="#fff" stroke-width="1.8"/></svg>
<!-- ===== batch content ===== -->
<div class="t r" style="left:560px;top:76.5px;width:72px">Job number:</div>
<div class="ed" style="left:632px;top:76px;width:112px;height:12px"></div>
<div class="t" style="left:633.5px;top:77.5px">ABC123XX</div>
<div class="t r" style="left:560px;top:94px;width:72px">Delivery date:</div>
<div class="ed" style="left:632px;top:94px;width:44px;height:11.5px"></div>
<div class="t" style="left:633.5px;top:95.5px">27.02.2022</div>
<div class="t r" style="left:560px;top:111.5px;width:72px">Info 1:</div>
<div class="ed" style="left:632px;top:112px;width:92px;height:12px"></div>
<div class="t" style="left:633.5px;top:113.5px">Customer1</div>
<div class="t r" style="left:560px;top:129px;width:72px">Info 2:</div>
<div class="ed" style="left:632px;top:130px;width:92px;height:11.5px"></div>

<div class="t" style="left:786px;top:93px">Form:</div>
<div class="a" style="left:806px;top:92px;width:21.5px;height:12px;background:#c3c3c3;border-top:1px solid #7a7a7a;border-left:1px solid #7a7a7a"></div>
<div class="t" style="left:806px;top:93.5px;width:21.5px;text-align:center">RO</div>
<div class="t" style="left:765.5px;top:108.5px">A:</div>
<div class="ed" style="left:771.5px;top:109px;width:36px;height:11px"></div>
<div class="t r" style="left:771.5px;top:110.5px;width:35px;font-size:7.8px">150,00</div>
<div class="t" style="left:809px;top:108px;font-size:6.4px">mm</div>
<div class="t" style="left:765.5px;top:122.5px">B:</div>
<div class="ed" style="left:771.5px;top:122px;width:36px;height:11px"></div>
<div class="t r" style="left:771.5px;top:123.5px;width:35px;font-size:7.8px;color:#a0a0a0">150,00</div>
<div class="t" style="left:809px;top:121px;font-size:6.4px">mm</div>
<div class="t" style="left:765.5px;top:136.5px">C:</div>
<div class="ed" style="left:771.5px;top:136px;width:36px;height:11px"></div>
<div class="t r" style="left:771.5px;top:137.5px;width:35px;font-size:7.8px">20,00</div>
<div class="t" style="left:809px;top:135px;font-size:6.4px">mm</div>

<!-- tube image -->
<svg class="a" style="left:835px;top:76px" width="89" height="76">
<rect x="0" y="0" width="89" height="76" fill="#c4c4c4"/>
<rect x="0" y="0" width="89" height="1.5" fill="#6a6a6a"/><rect x="0" y="0" width="1.5" height="76" fill="#8a8a8a"/>
<path d="M9 8 Q5 12 10 19 L40 62 L75 38 L17 6 Q12 5 9 8Z" fill="#6e6e6e" stroke="#222" stroke-width="1"/>
<circle cx="58.5" cy="48.5" r="21" fill="#fafa9a" stroke="#333" stroke-width="1"/>
<circle cx="58.5" cy="48.5" r="13" fill="#585858" stroke="#222" stroke-width="1"/>
<rect x="83" y="17" width="3" height="56" fill="#000"/>
<rect x="12" y="70" width="74" height="3" fill="#000"/>
<path d="M37.5 14H79.5M37.5 14V44M79.5 14V48M27 50V75.5M27 63H57M27 67H57" stroke="#e0202a" stroke-width="1" fill="none"/>
<path d="M38 14l3-2v4zM79 14l-3-2v4z" fill="#e0202a"/>
<text x="58" y="13" font-size="9" font-weight="bold" fill="#e0202a" text-anchor="middle" font-family="Liberation Sans">A</text>
<text x="22" y="56" font-size="9" font-weight="bold" fill="#e0202a" text-anchor="middle" font-family="Liberation Sans">C</text>
</svg>
<div class="bt" style="left:929px;top:84px;width:23px;height:22.5px"></div>
<div class="a" style="left:932.5px;top:87px;width:16.5px;height:16px;background:#c8c8c8"></div>
<div class="a" style="left:934.5px;top:89px;width:12px;height:12px;border:1px solid #aaa;border-radius:50%"></div>

<div class="t r" style="left:760px;top:161.5px;width:66px">Material:</div>
<div class="ed" style="left:828px;top:161px;width:97px;height:11.5px"></div>
<div class="t" style="left:829.5px;top:162.5px;font-size:7.6px">1.0037</div>
<div class="a" style="left:913px;top:162px;width:12px;height:11px;background:#c7c7c7;border-right:1px solid #777;border-bottom:1px solid #777"></div>
<svg class="a" style="left:916px;top:165px" width="7" height="5"><path d="M0.5 1H6.5L3.5 4Z" fill="#111"/></svg>
<div class="a" style="left:828px;top:176px;width:93px;height:10px;border-top:1px solid #7a7a7a;border-left:1px solid #7a7a7a"></div>
<div class="t" style="left:829.5px;top:176.5px;font-size:7.6px">St37-2</div>
<div class="t r" style="left:760px;top:194px;width:66px">batch / charge:</div>
<div class="ed" style="left:828px;top:193px;width:111px;height:11px"></div>
<div class="t" style="left:829.5px;top:194.5px;font-size:7.6px">789</div>

<div class="t r" style="left:580px;top:185.5px;width:51.5px">Type:</div>
<div class="ed" style="left:632px;top:185px;width:64px;height:11px"></div>
<div class="t" style="left:633.5px;top:186.5px">Good piece</div>
<div class="a" style="left:686px;top:186px;width:10px;height:10px;border-right:1px solid #777;border-bottom:1px solid #777"></div>
<svg class="a" style="left:688px;top:189px" width="6" height="4"><path d="M0.5 0.5H5.5L3 3.5Z" fill="#111"/></svg>
<div class="t r" style="left:580px;top:204px;width:51.5px">Trim cut:</div>
<div class="ed" style="left:632px;top:205px;width:27px;height:11px"></div>
<div class="t r" style="left:632px;top:206.5px;width:26px;font-size:7.8px">10</div>
<div class="t" style="left:660px;top:204.5px;font-size:6.5px">mm</div>
<div class="t r" style="left:580px;top:220.5px;width:51.5px">Cut length:</div>
<div class="ed" style="left:632px;top:221px;width:36px;height:11px"></div>
<div class="t r" style="left:632px;top:222.5px;width:35.5px;font-size:7.8px">120,00</div>
<div class="t" style="left:669.5px;top:223px;font-size:6.5px">mm</div>

<div class="ed" style="left:609.5px;top:239.5px;width:31px;height:10.5px"></div>
<div class="t r" style="left:609.5px;top:240.5px;width:30.5px;font-size:7.6px">45,00</div>
<div class="t" style="left:641.5px;top:238px;font-size:6px">°</div>
<div class="ed" style="left:731px;top:239.5px;width:31px;height:10.5px"></div>
<div class="t r" style="left:731px;top:240.5px;width:30.5px;font-size:7.6px">45,00</div>
<div class="t" style="left:763px;top:238px;font-size:6px">°</div>
<svg class="a" style="left:563px;top:253px" width="261" height="48">
<rect x="0" y="0" width="261" height="4" fill="#1e1e1e"/>
<rect x="0" y="4" width="261" height="43.5" fill="#fcfc94"/>
<path d="M0 4H3L43 47.5H0Z" fill="#bdbdbd"/>
<rect x="0" y="4" width="1.5" height="43.5" fill="#6a6a6a"/>
<path d="M226 4L183 47.5" stroke="#8a8a70" stroke-width="1.2"/>
</svg>
<div class="ed" style="left:609.5px;top:304px;width:31px;height:11.5px"></div>
<div class="t r" style="left:609.5px;top:305.5px;width:30.5px;font-size:7.6px">135,00</div>
<div class="t" style="left:641.5px;top:303px;font-size:6px">°</div>
<div class="ed" style="left:731px;top:304px;width:31px;height:11.5px"></div>
<div class="t r" style="left:731px;top:305.5px;width:30.5px;font-size:7.6px">135,00</div>
<div class="t" style="left:763px;top:303px;font-size:6px">°</div>
<svg class="a" style="left:670px;top:304px" width="30" height="9"><path d="M0.5 4.5H22" stroke="#111" stroke-width="2.2"/><path d="M19 1.5L29 4.5L19 7.5Z" fill="#111"/></svg>
<div class="t" style="left:666.5px;top:319.5px">1</div>
<div class="t" style="left:678.5px;top:319.5px">x</div>
<div class="t" style="left:692px;top:319.5px">6000,00</div>
<div class="t" style="left:725.5px;top:319.5px">mm</div>

<!-- Stillage -->
<div class="gb" style="left:838px;top:216.5px;width:118px;height:66.5px"></div>
<div class="gl" style="left:843px;top:212px">Stillage position</div>
<svg class="a" style="left:843.5px;top:238px" width="26" height="25">
<rect width="26" height="25" fill="#bdbdbd"/><rect width="26" height="1.5" fill="#777"/>
<rect x="3" y="4" width="13" height="5" fill="#222"/><rect x="5" y="5" width="9" height="4" fill="#c2454d"/>
<rect x="3" y="10" width="14" height="3" fill="#1d6b4f"/>
<rect x="3" y="13" width="2" height="10" fill="#555"/><rect x="15" y="13" width="2" height="10" fill="#555"/>
<rect x="17" y="15" width="7" height="5" fill="#f5f58a" stroke="#333" stroke-width=".8"/>
<path d="M18 9L22 12" stroke="#7a7a20" stroke-width="1.5"/>
</svg>
<div class="ed" style="left:843.5px;top:266.5px;width:27px;height:12.5px;box-shadow:inset -1px -1px 0 #999"></div>
<div class="t" style="left:846px;top:268px;font-size:7.8px">10</div>
<svg class="a" style="left:860px;top:271px" width="7" height="4"><path d="M0.5 0.5H6L3.2 3.5Z" fill="#111"/></svg>
<!-- Number of pieces -->
<div class="gb" style="left:838px;top:291.5px;width:118px;height:40px"></div>
<div class="gl" style="left:843px;top:287px">Number of pieces</div>
<div class="t r" style="left:860px;top:298.5px;width:43.5px">Target</div>
<div class="ed" style="left:906px;top:294.5px;width:45.5px;height:14.5px"></div>
<div class="a" style="left:934px;top:296px;width:17.5px;height:12px;background:#0a78d7;overflow:hidden;color:#fff;font-size:9.5px;line-height:12px;padding-left:1px">20</div>
<div class="t r" style="left:860px;top:312px;width:43.5px">Actual</div>
<div class="a" style="left:906px;top:312px;width:45.5px;height:14px;background:#c2c2c2;border-top:1px solid #7a7a7a;border-left:1px solid #7a7a7a"></div>
<div class="t r" style="left:906px;top:314px;width:44px;font-size:9.5px;line-height:11px">0</div>

<!-- Settings -->
<div class="gb" style="left:963.5px;top:74px;width:81px;height:128px"></div>
<div class="gl" style="left:968px;top:69.5px">Settings</div>
<svg class="a" style="left:975px;top:82.5px" width="25" height="25"><rect width="25" height="25" fill="#bdbdbd"/><rect width="25" height="1.5" fill="#777"/><rect width="1.5" height="25" fill="#8a8a8a"/>
<path d="M3 5H22V11H20V17H17V11H14V17H11V11H8V17H5V11H3Z" fill="#f5f51e" stroke="#222" stroke-width=".9"/><path d="M7 19L12.5 24L18 19Z" fill="#33c3d6"/></svg>
<svg class="a" style="left:975px;top:112px" width="25" height="25"><rect width="25" height="25" fill="#d0d0d0"/><rect width="25" height="1.5" fill="#222"/><rect width="1.5" height="25" fill="#222"/>
<path d="M3 5H9M3 9H9M16 5H22M16 9H22" stroke="#111" stroke-width="1.3"/><path d="M9 3L11 5L9 7ZM16 3L14 5L16 7ZM9 7L11 9L9 11ZM16 7L14 9L16 11Z" fill="#111"/>
<text x="12.5" y="10" font-size="7" font-weight="bold" text-anchor="middle" font-family="Liberation Sans" fill="#111">P</text>
<path d="M3 23L8 15V23ZM22 23L17 15V23Z" fill="#f5f51e" stroke="#222" stroke-width=".8"/><rect x="7.5" y="15" width="1.5" height="8" fill="#8a1a1a"/><rect x="16" y="15" width="1.5" height="8" fill="#8a1a1a"/></svg>
<svg class="a" style="left:975px;top:142px" width="25" height="25"><rect width="25" height="25" fill="#bdbdbd"/><rect width="25" height="1.5" fill="#777"/>
<path d="M5 9H12L10 15H3ZM14 9H22L20 15H12.5Z" fill="#f5f51e" stroke="#222" stroke-width=".9"/></svg>
<svg class="a" style="left:975px;top:172px" width="25" height="26"><rect width="25" height="26" fill="#bdbdbd"/><rect width="25" height="1.5" fill="#777"/>
<path d="M12.5 3V9" stroke="#111" stroke-width="1.3"/><path d="M10 8H15L12.5 11Z" fill="#111"/>
<rect x="3" y="14" width="19" height="7" fill="#f5f51e" stroke="#222" stroke-width=".9"/><path d="M4 21V23M7 21V23M10 21V23M13 21V23M16 21V23M19 21V23" stroke="#222" stroke-width="1"/></svg>
<div class="bt" style="left:1007px;top:82.5px;width:24px;height:24px"></div>
<div class="t b" style="left:1011px;top:89px;font-size:8.6px;line-height:10px;letter-spacing:-.3px"><svg width="4.5" height="8" style="vertical-align:-0.5px;margin-right:.6px"><circle cx="2.2" cy="2.3" r="1.5" fill="none" stroke="#111" stroke-width="1.3"/><path d="M2.2 3.8V8M.6 6H3.8" stroke="#111" stroke-width="1.2"/></svg>F1</div>
<div class="bt" style="left:1007px;top:111.5px;width:24px;height:24px"></div>
<div class="t b" style="left:1011px;top:118px;font-size:8.6px;line-height:10px;letter-spacing:-.3px"><svg width="4.5" height="8" style="vertical-align:-0.5px;margin-right:.6px"><circle cx="2.2" cy="2.3" r="1.5" fill="none" stroke="#111" stroke-width="1.3"/><path d="M2.2 3.8V8M.6 6H3.8" stroke="#111" stroke-width="1.2"/></svg>F2</div>
<div class="bt" style="left:1007px;top:142px;width:24px;height:24.5px"></div>
<div class="t b" style="left:1011px;top:149px;font-size:8.6px;line-height:10px;letter-spacing:-.3px"><svg width="4.5" height="8" style="vertical-align:-0.5px;margin-right:.6px"><circle cx="2.2" cy="2.3" r="1.5" fill="none" stroke="#111" stroke-width="1.3"/><path d="M2.2 3.8V8M.6 6H3.8" stroke="#111" stroke-width="1.2"/></svg>F3</div>
<div class="ed" style="left:1008px;top:178px;width:21px;height:11.5px"></div>
<div class="t" style="left:1014px;top:179.5px;font-size:8px">2</div>
<!-- Options -->
<div class="gb" style="left:963.5px;top:211px;width:81px;height:119.5px"></div>
<div class="gl" style="left:968px;top:206.5px">Options</div>
<div class="a" style="left:977px;top:222.5px;width:8px;height:8px;border-top:1px solid #666;border-left:1px solid #666;box-shadow:inset 1px 1px 0 #bbb"></div>
<div class="t" style="left:989px;top:222px">Marking</div>

<!-- toolbar -->
<div class="bt" style="left:563.0px;top:338px;width:31.5px;height:31px"></div>
<svg class="a" style="left:566.5px;top:341.5px" width="23" height="23"><rect width="23" height="23" fill="#c2c2c2"/><path d="M3 6L7 3L19 8L19 21L8 21L3 14Z" fill="#6a6a6a" stroke="#111" stroke-width="1"/><rect x="8" y="9" width="12" height="12" fill="#fafa8c" stroke="#111" stroke-width="1.3"/></svg>
<div class="bt" style="left:600.5px;top:338px;width:31.5px;height:31px"></div>
<svg class="a" style="left:604.0px;top:341.5px" width="23" height="23"><rect width="23" height="23" fill="#c2c2c2"/><text x="11.5" y="8" font-size="8" text-anchor="middle" font-family="Liberation Sans" fill="#d8d860">?</text><rect x="2.5" y="10" width="18" height="10" rx="1" fill="#111"/><rect x="3.5" y="14.5" width="16" height="5" fill="#fafa8c"/><rect x="4" y="11" width="15" height="2" fill="#ddd"/></svg>
<div class="bt" style="left:638.0px;top:338px;width:31.5px;height:31px"></div>
<svg class="a" style="left:641.5px;top:341.5px" width="23" height="23"><rect width="23" height="23" fill="#c2c2c2"/><path d="M2 14L15 6.5L21 9L21 12.5L8 20L2 17.5Z" fill="#e6e61a"/><path d="M3 15.3L17 7.3M4.5 17.3L19.5 9.3M6 19L21 11" stroke="#7a7a30" stroke-width=".6"/><path d="M3 16H4M5 17.5H6M7 19H8M3.5 14.3H4.5" stroke="#333" stroke-width="1"/></svg>
<div class="bt" style="left:675.5px;top:338px;width:31.5px;height:31px"></div>
<svg class="a" style="left:679.0px;top:341.5px" width="23" height="23"><rect width="23" height="23" fill="#6d6d6d"/><rect x="7" y="3" width="12" height="3.5" fill="#f5f51e"/><rect x="7" y="16.5" width="12" height="3.5" fill="#f5f51e"/><rect x="8" y="8" width="10" height="7" fill="#222"/><path d="M9 10H17M9 12.5H17M11 8V15M14 8V15" stroke="#888" stroke-width=".7"/><path d="M2 11.5H6" stroke="#fff" stroke-width="2"/><path d="M5 9L8 11.5L5 14Z" fill="#fff"/></svg>
<div class="bt" style="left:713.0px;top:338px;width:31.5px;height:31px"></div>
<svg class="a" style="left:716.5px;top:341.5px" width="23" height="23"><rect width="23" height="23" fill="#6d6d6d"/><path d="M2 2H7M2 2L5 5L2 8H7" stroke="#2ec4c4" stroke-width="1.8" fill="none"/><path d="M7 15L16 6M8 19L21 6M13 19L21 11" stroke="#f5f51e" stroke-width="2.2"/></svg>
<div class="bt" style="left:750.5px;top:338px;width:31.5px;height:31px"></div>
<svg class="a" style="left:754.0px;top:341.5px" width="23" height="23"><rect width="23" height="23" fill="#6d6d6d"/><path d="M4 14L13 5M6 18L18 6M11 18L19 10" stroke="#f5f51e" stroke-width="2.2"/></svg>
<div class="bt" style="left:788.0px;top:338px;width:31.5px;height:31px"></div>
<svg class="a" style="left:791.5px;top:341.5px" width="23" height="23"><rect width="23" height="23" fill="#6d6d6d"/><rect x="6" y="3.5" width="12" height="3.5" fill="#f5f51e"/><rect x="6" y="16.5" width="12" height="3.5" fill="#f5f51e"/><path d="M12 7V13" stroke="#fff" stroke-width="1.6"/><path d="M9.5 12H14.5L12 15.5Z" fill="#fff"/></svg>
<div class="bt" style="left:825.5px;top:338px;width:31.5px;height:31px"></div>
<svg class="a" style="left:829.0px;top:341.5px" width="23" height="23"><rect width="23" height="23" fill="#6d6d6d"/><rect x="9" y="3" width="11" height="3.5" fill="#f5f51e"/><rect x="9" y="16.5" width="11" height="3.5" fill="#f5f51e"/><path d="M10 14L18 7M12 16L19 10" stroke="#f5f51e" stroke-width="1.8"/><path d="M2 11.5H6" stroke="#fff" stroke-width="1.8"/><path d="M5 9L8 11.5L5 14Z" fill="#fff"/></svg>
<div class="bt" style="left:863.0px;top:338px;width:31.5px;height:31px"></div>
<svg class="a" style="left:866.5px;top:341.5px" width="23" height="23"><rect width="23" height="23" fill="#6d6d6d"/><rect x="6" y="10" width="12" height="3.5" fill="#f5f51e"/></svg>
<div class="bt" style="left:900.5px;top:338px;width:31.5px;height:31px"></div>
<svg class="a" style="left:904.0px;top:341.5px" width="23" height="23"><rect width="23" height="23" fill="#6d6d6d"/><rect x="5" y="10" width="13" height="3.2" fill="#f5f51e"/><rect x="10" y="5" width="3.2" height="13" fill="#f5f51e"/></svg>
<div class="bt" style="left:938.0px;top:338px;width:31.5px;height:31px"></div>
<svg class="a" style="left:941.5px;top:341.5px" width="23" height="23"><rect width="23" height="23" fill="#6d6d6d"/><circle cx="12" cy="5" r="2" fill="#f5f51e"/><rect x="10.2" y="8.5" width="3.6" height="10" fill="#f5f51e"/><rect x="8.5" y="17" width="7" height="2.5" fill="#f5f51e"/></svg>
<div class="bt" style="left:975.5px;top:338px;width:31.5px;height:31px"></div>
<svg class="a" style="left:979.0px;top:341.5px" width="23" height="23"><rect x="5" y="4" width="14" height="15" fill="#c8c8c8"/><path d="M6 12L10 17L18 6" stroke="#0a7a1a" stroke-width="3" fill="none"/><path d="M7 12L10 15.5" stroke="#38c048" stroke-width="1" fill="none"/></svg>
<div class="bt" style="left:1013.0px;top:338px;width:31.5px;height:31px"></div>
<svg class="a" style="left:1016.5px;top:341.5px" width="23" height="23"><rect x="5" y="4" width="14" height="15" fill="#c8c8c8"/><path d="M8 7L16 16M16 7L8 16" stroke="#8a0e16" stroke-width="3"/></svg>

<!-- batch statusbar -->
<div class="a" style="left:557px;top:435px;width:549px;height:2px;background:#a9a9a9;border-bottom:1px solid #fff"></div>
<div class="a" style="left:616px;top:440px;width:11px;height:9px;background:#c3c3c3"></div>
<div class="a" style="left:1005px;top:437px;width:18px;height:12px;border-left:1px solid #b0b0b0;border-top:1px solid #b0b0b0"></div>
<div class="t" style="left:1006px;top:439px;font-size:7px;color:#9a9a9a">Ovr</div>
<div class="a" style="left:1022px;top:437px;width:72px;height:12px;border-left:1px solid #b0b0b0;border-top:1px solid #b0b0b0"></div>
<div class="t" style="left:1024px;top:439px;font-size:7px">Freigabe</div>
<svg class="a" style="left:1094px;top:439px" width="11" height="10"><path d="M10 2L2 10M10 5L5 10M10 8L8 10" stroke="#b5b5b5" stroke-width="1"/></svg>

<!-- status bar -->
<div class="a" style="left:0;top:659px;width:1200px;height:16px;background:#f0f0f0;border-top:2px solid #fff"></div>
<div class="a" style="left:0;top:673px;width:1200px;height:2px;background:#4a4a4a"></div>
<div class="a" style="left:155px;top:661px;width:1042px;height:1px;background:#c9c9c9"></div><div class="a" style="left:155px;top:661px;width:1px;height:12px;background:#9a9a9a"></div>
<div class="a" style="left:157px;top:662px;width:11px;height:10px;background:#c3c3c3;border-left:1px solid #777;border-top:1px solid #777"></div>
<div class="a" style="left:822px;top:661px;width:1px;height:12px;background:#a0a0a0"></div>
<div class="a" style="left:823px;top:662px;width:14px;height:10px;background:#2a1a1a"></div>
<div class="a" style="left:825px;top:664px;width:5px;height:6px;border-radius:50%;background:#a3182a"></div>
<div class="a" style="left:830px;top:664px;width:5px;height:6px;border-radius:50%;background:#c0202e"></div>
<div class="t" style="left:840px;top:662.5px;font-size:7px;color:#444">Inaktiv</div>
<div class="a" style="left:878px;top:661px;width:1px;height:12px;background:#a0a0a0"></div>
<div class="t" style="left:881px;top:662.5px;font-size:7.2px">LOCAL</div>
<div class="a" style="left:923px;top:661px;width:1px;height:12px;background:#a0a0a0"></div>
<div class="a" style="left:926px;top:662px;width:10.5px;height:10px;background:#bdbdbd"></div>
<div class="t" style="left:937px;top:662.5px;font-size:7px">Offline</div>
<div class="a" style="left:961px;top:661px;width:1px;height:12px;background:#a0a0a0"></div>
<div class="t" style="left:964px;top:662.5px;font-size:7.2px">41x1,3</div>
<div class="t" style="left:998px;top:662.5px;font-size:7px">LENOX | 1,00 | 2,20 | Bi</div>
<div class="a" style="left:1085px;top:661px;width:1px;height:12px;background:#a0a0a0"></div>
<div class="a" style="left:1086px;top:662px;width:68px;height:11px;background:linear-gradient(90deg,#fff 20px,#f0f0f0 60px)"></div>
<div class="a" style="left:1154px;top:661px;width:1px;height:12px;background:#a0a0a0"></div>
<div class="t" style="left:1157px;top:662.5px;font-size:7.2px">10:53:46</div>
<div class="a" style="left:1197px;top:659px;width:3px;height:16px;background:#f0f0f0"></div>

</body></html>
